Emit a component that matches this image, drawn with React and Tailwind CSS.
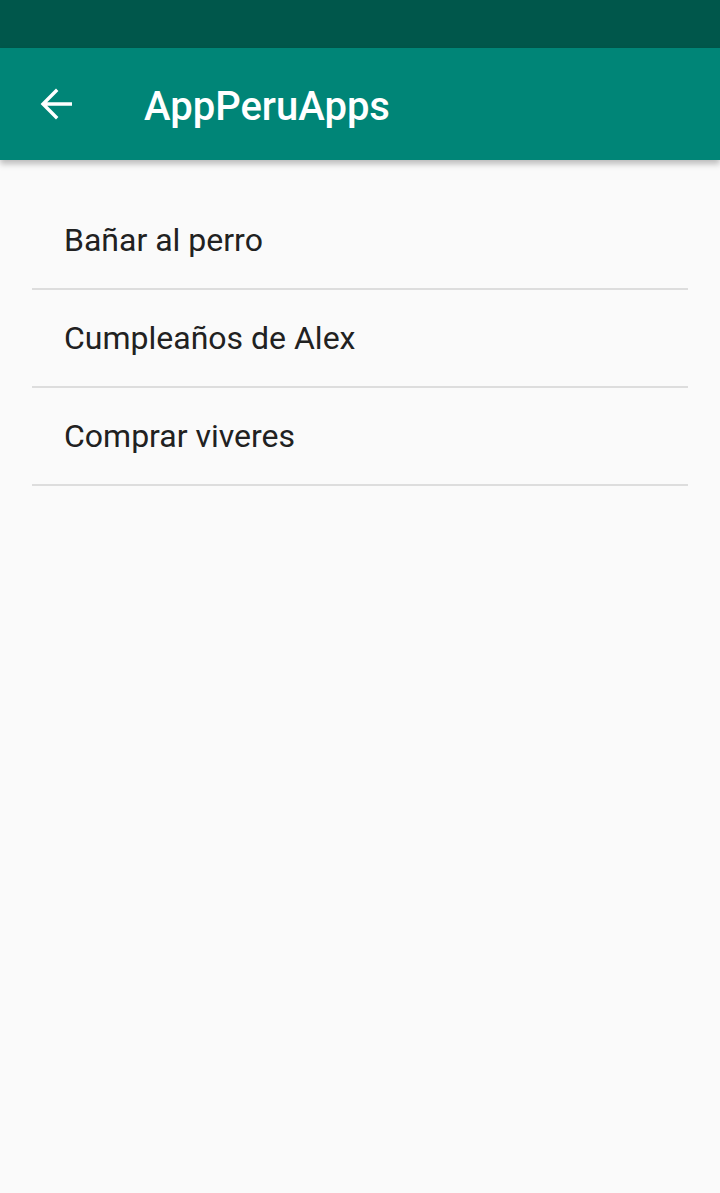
const items = ['Bañar al perro', 'Cumpleaños de Alex', 'Comprar viveres'];

export default function App() {
    return (
        <div className="min-h-[1193px] bg-[#fafafa] font-['Roboto',sans-serif]">
            {/* Status bar */}
            <div className="h-[48px] bg-[#00574b]" />

            {/* Toolbar */}
            <div className="relative z-10 flex h-[112px] items-center bg-[#008577] shadow-[0_4px_6px_rgba(0,0,0,0.25)]">
                <button className="ml-[32px] flex h-[48px] w-[48px] items-center justify-center">
                    <svg width="48" height="48" viewBox="0 0 24 24" fill="white">
                        <path d="M20 11.1H7.6l5.6-5.6L12 4.3l-7.7 7.7 7.7 7.7 1.2-1.2-5.6-5.6H20v-1.8z" />
                    </svg>
                </button>
                <h1 className="ml-[64px] pt-[6px] text-[40px] font-medium text-white leading-none">AppPeruApps</h1>
            </div>

            {/* List */}
            <div className="px-[32px] pt-[32px]">
                {items.map(item => (
                    <div key={item} className="flex h-[98px] items-center border-b-2 border-[#dddddd] pl-[32px]">
                        <span className="text-[32px] text-[#212121] leading-none">{item}</span>
                    </div>
                ))}
            </div>
        </div>
    );
}
